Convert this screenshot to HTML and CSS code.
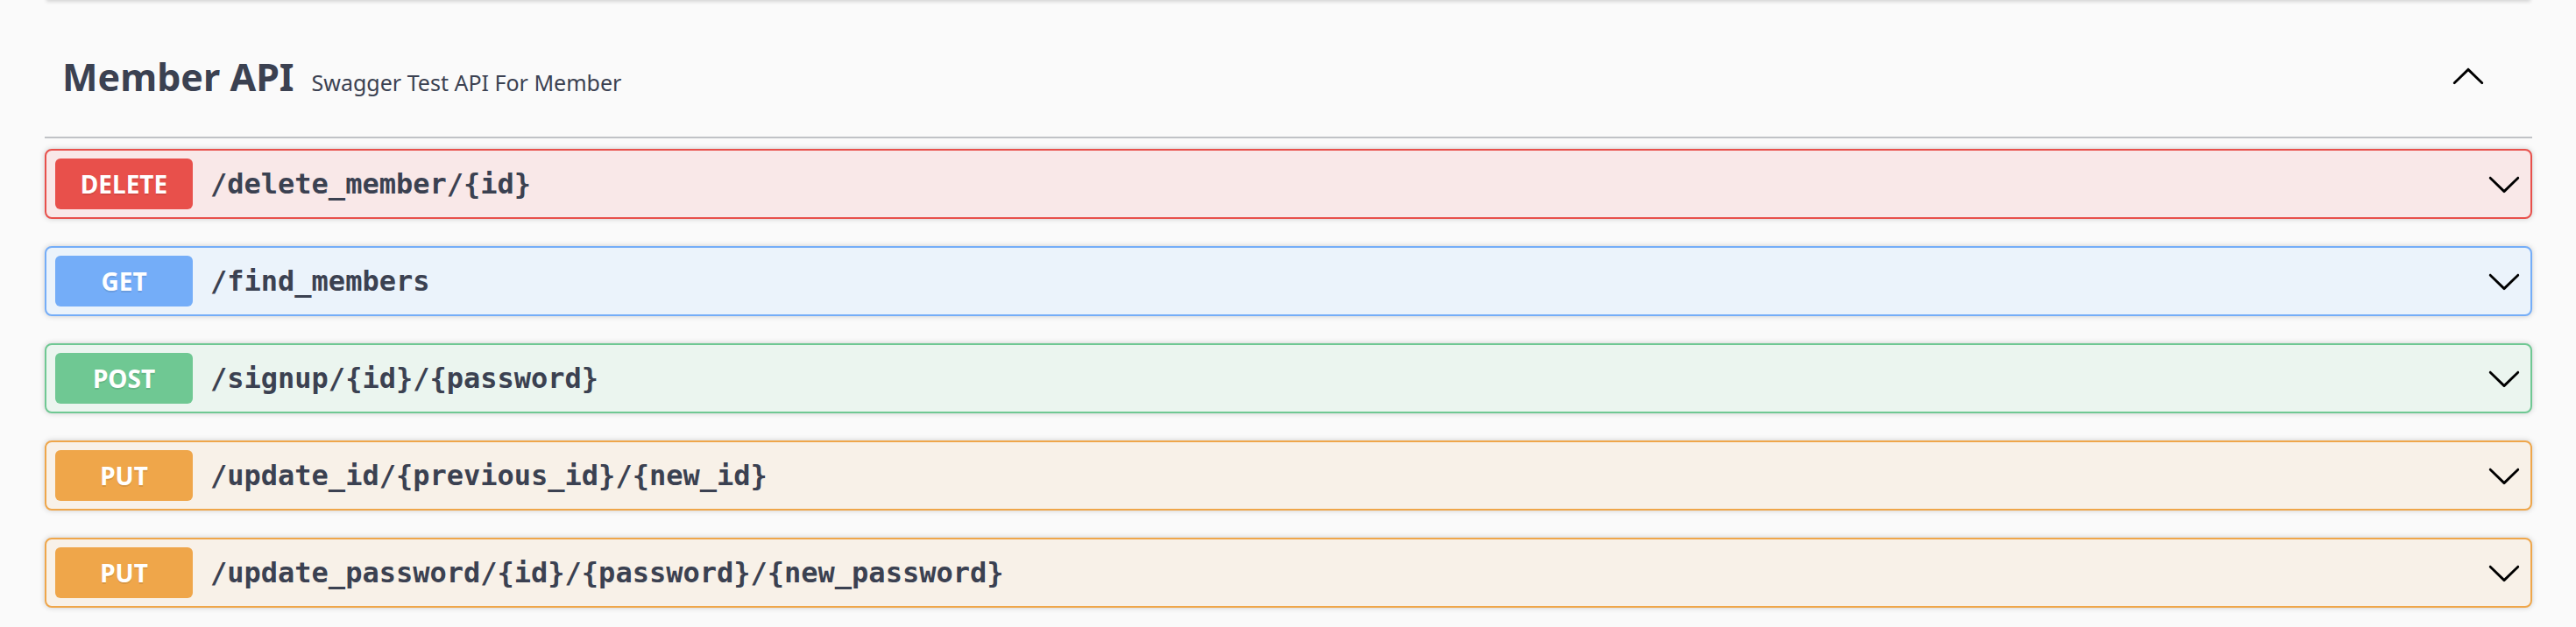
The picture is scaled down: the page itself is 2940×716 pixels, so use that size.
FILE: index.html
```html
<!DOCTYPE html>
<html lang="en">
<head>
<meta charset="utf-8">
<title>Member API</title>
<link rel="stylesheet" href="styles.css">
</head>
<body>
<div class="wrap">
  <div class="scheme"></div>
  <section class="tag-section">
    <h3 class="tag">
      <span class="tag-title">
        <span class="tag-name">Member API</span>
        <small class="tag-desc">Swagger Test API For Member</small>
      </span>
      <svg class="arrow" width="40" height="40" viewBox="0 0 20 20" aria-hidden="true"><path transform="rotate(180 10 10)" d="M17.418 6.109c.272-.268.709-.268.979 0s.271.701 0 .969l-7.908 7.83c-.27.268-.707.268-.979 0l-7.908-7.83c-.27-.268-.27-.701 0-.969.271-.268.709-.268.979 0L10 13.25l7.418-7.141z"/></svg>
    </h3>
    <div class="ops">
      <div class="op op-delete">
        <span class="method">DELETE</span>
        <span class="path">/delete_member/{id}</span>
        <svg class="arrow" width="40" height="40" viewBox="0 0 20 20" aria-hidden="true"><path d="M17.418 6.109c.272-.268.709-.268.979 0s.271.701 0 .969l-7.908 7.83c-.27.268-.707.268-.979 0l-7.908-7.83c-.27-.268-.27-.701 0-.969.271-.268.709-.268.979 0L10 13.25l7.418-7.141z"/></svg>
      </div>
      <div class="op op-get">
        <span class="method">GET</span>
        <span class="path">/find_members</span>
        <svg class="arrow" width="40" height="40" viewBox="0 0 20 20" aria-hidden="true"><path d="M17.418 6.109c.272-.268.709-.268.979 0s.271.701 0 .969l-7.908 7.83c-.27.268-.707.268-.979 0l-7.908-7.83c-.27-.268-.27-.701 0-.969.271-.268.709-.268.979 0L10 13.25l7.418-7.141z"/></svg>
      </div>
      <div class="op op-post">
        <span class="method">POST</span>
        <span class="path">/signup/{id}/{password}</span>
        <svg class="arrow" width="40" height="40" viewBox="0 0 20 20" aria-hidden="true"><path d="M17.418 6.109c.272-.268.709-.268.979 0s.271.701 0 .969l-7.908 7.83c-.27.268-.707.268-.979 0l-7.908-7.83c-.27-.268-.27-.701 0-.969.271-.268.709-.268.979 0L10 13.25l7.418-7.141z"/></svg>
      </div>
      <div class="op op-put">
        <span class="method">PUT</span>
        <span class="path">/update_id/{previous_id}/{new_id}</span>
        <svg class="arrow" width="40" height="40" viewBox="0 0 20 20" aria-hidden="true"><path d="M17.418 6.109c.272-.268.709-.268.979 0s.271.701 0 .969l-7.908 7.83c-.27.268-.707.268-.979 0l-7.908-7.83c-.27-.268-.27-.701 0-.969.271-.268.709-.268.979 0L10 13.25l7.418-7.141z"/></svg>
      </div>
      <div class="op op-put">
        <span class="method">PUT</span>
        <span class="path">/update_password/{id}/{password}/{new_password}</span>
        <svg class="arrow" width="40" height="40" viewBox="0 0 20 20" aria-hidden="true"><path d="M17.418 6.109c.272-.268.709-.268.979 0s.271.701 0 .969l-7.908 7.83c-.27.268-.707.268-.979 0l-7.908-7.83c-.27-.268-.27-.701 0-.969.271-.268.709-.268.979 0L10 13.25l7.418-7.141z"/></svg>
      </div>
    </div>
  </section>
</div>
</body>
</html>
```

FILE: styles.css
```css
html, body {
  margin: 0;
  padding: 0;
  background: #fafafa;
}

.wrap {
  padding: 0 50px 0 51px;
  font-family: "Noto Sans", "Open Sans", sans-serif;
  color: #3b4151;
}

.scheme {
  height: 20px;
  margin: -20px 2px 0;
  background: #fafafa;
  box-shadow: 0 2px 4px rgba(0, 0, 0, 0.15);
}

.tag {
  margin: 20px 0 0;
  height: 138px;
  box-sizing: border-box;
  padding: 0 53px 0 20px;
  border-bottom: 2px solid rgba(59, 65, 81, 0.3);
  display: flex;
  align-items: center;
  font-weight: 400;
}

.tag-title {
  flex: 1;
  display: flex;
  align-items: baseline;
}

.tag-name {
  font-size: 43px;
  font-weight: 700;
  line-height: 1.2;
}

.tag-desc {
  font-size: 25px;
  font-weight: 400;
  margin-left: 20px;
}

.arrow {
  display: block;
  flex: none;
  fill: #000;
}

.ops {
  padding-top: 12px;
}

.op {
  height: 80px;
  box-sizing: border-box;
  margin-bottom: 31px;
  padding: 9px 10px;
  border: 2px solid;
  border-radius: 8px;
  box-shadow: 0 0 6px rgba(0, 0, 0, 0.19);
  display: flex;
  align-items: center;
}

.method {
  width: 157px;
  height: 58px;
  flex: none;
  border-radius: 6px;
  display: flex;
  align-items: center;
  justify-content: center;
  color: #fff;
  font-size: 28px;
  font-weight: 700;
  text-shadow: 0 2px 0 rgba(0, 0, 0, 0.1);
}

.path {
  flex: 1;
  padding: 0 20px;
  font-family: "DejaVu Sans Mono", monospace;
  font-size: 32px;
  font-weight: 700;
  color: #3b4151;
}

.op-delete { border-color: #e8504b; background: #f9e8e8; }
.op-delete .method { background: #e8504b; }

.op-get { border-color: #74adf8; background: #ebf3fb; }
.op-get .method { background: #74adf8; }

.op-post { border-color: #6fc893; background: #ebf5ef; }
.op-post .method { background: #6fc893; }

.op-put { border-color: #efa64a; background: #f8f1e8; }
.op-put .method { background: #efa64a; }
```
